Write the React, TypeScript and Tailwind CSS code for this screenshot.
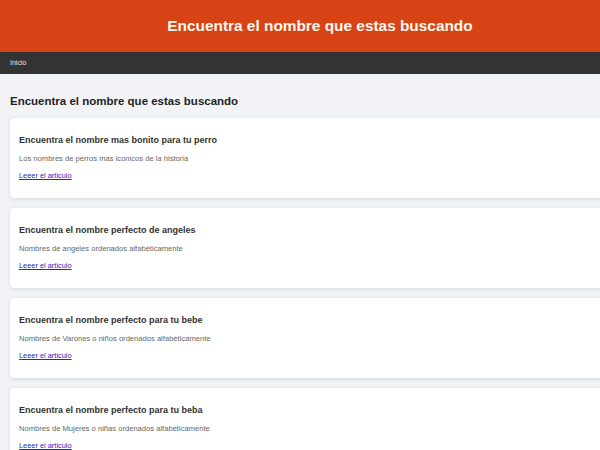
const articles = [
  {
    title: "Encuentra el nombre mas bonito para tu perro",
    desc: "Los nombres de perros mas iconicos de la historia",
  },
  {
    title: "Encuentra el nombre perfecto de angeles",
    desc: "Nombres de angeles ordenados alfabéticamente",
  },
  {
    title: "Encuentra el nombre perfecto para tu bebe",
    desc: "Nombres de Varones o niños ordenados alfabéticamente",
  },
  {
    title: "Encuentra el nombre perfecto para tu beba",
    desc: "Nombres de Mujeres o niñas ordenados alfabéticamente",
  },
];

const App = () => {
  return (
    <div className="w-[640px] min-h-[450px] bg-[#f2f3f6] font-['Liberation_Sans',Arial,sans-serif]">
      {/* Header */}
      <header className="h-[52px] bg-[#d84315] flex items-center justify-center">
        <h1 className="text-[15.4px] font-bold text-[#fff8ee]">Encuentra el nombre que estas buscando</h1>
      </header>

      {/* Nav */}
      <nav className="h-[22px] bg-[#333333] flex items-center px-[10px]">
        <a className="text-[7px] text-[#e6e6e6]">Inicio</a>
      </nav>

      <main className="px-[10px] pt-[20px]">
        <h2 className="text-[11.5px] font-bold text-[#1f1f1f] mb-[9px] leading-[15px]">
          Encuentra el nombre que estas buscando
        </h2>
        <div className="flex flex-col gap-[10px]">
          {articles.map((a) => (
            <div
              key={a.title}
              className="h-[80px] bg-white rounded-[4px] shadow-[0_1px_4px_rgba(0,0,0,0.12)] px-[9px] pt-[17px]"
            >
              <h3 className="text-[9px] font-bold text-[#333] leading-[11px]">{a.title}</h3>
              <p className="text-[7.6px] text-[#666] mt-[8px] leading-[9px]">{a.desc}</p>
              <a href="#" className="block text-[7.4px] text-[#2626c9] underline mt-[8px] leading-[9px]">
                Leeer el articulo
              </a>
            </div>
          ))}
        </div>
      </main>
    </div>
  );
};

export default App;
